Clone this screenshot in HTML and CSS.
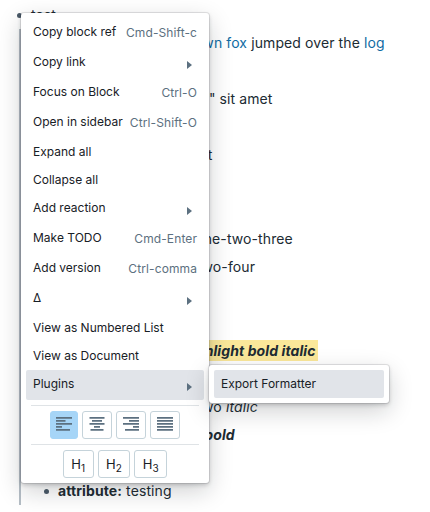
FILE: index.html
```html
<!DOCTYPE html>
<html lang="en">
<head>
    <meta charset="UTF-8">
    <title>Block menu</title>
    <link rel="stylesheet" href="styles.css">
</head>
<body>
    <div class="page">
        <div class="block top-block"><span class="bullet"></span>test</div>
        <div class="children">
            <div class="block shift-fox"><span class="bullet"></span>The <a href="#">quick brown fox</a> jumped over the <a href="#">log</a></div>
            <div class="block empty"></div>
            <div class="block shift-lorem"><span class="bullet"></span>Lorem "ipsum dolor" sit amet</div>
            <div class="block empty"></div>
            <div class="block shift-text"><span class="bullet"></span>Some text</div>
            <div class="block empty"></div>
            <div class="block empty"></div>
            <div class="block shift-three"><span class="bullet"></span>Numbers one-two-three</div>
            <div class="block shift-four"><span class="bullet"></span>one-two-four</div>
            <div class="block empty"></div>
            <div class="block empty"></div>
            <div class="block shift-mark"><span class="bullet"></span><mark><b><i>highlight bold italic</i></b></mark></div>
            <div class="block empty"></div>
            <div class="block shift-italic"><span class="bullet"></span>one two <i>italic</i></div>
            <div class="block shift-bold"><span class="bullet"></span><b><i>one bold</i></b></div>
            <div class="block empty"></div>
            <div class="block"><span class="bullet"></span><b>attribute:</b> testing</div>
        </div>
    </div>

    <div class="menu">
        <div class="item"><span class="text">Copy block ref</span><span class="label">Cmd-Shift-c</span></div>
        <div class="item"><span class="text">Copy link</span><span class="caret"></span></div>
        <div class="item"><span class="text">Focus on Block</span><span class="label">Ctrl-O</span></div>
        <div class="item"><span class="text">Open in sidebar</span><span class="label">Ctrl-Shift-O</span></div>
        <div class="item short"><span class="text">Expand all</span></div>
        <div class="item short"><span class="text">Collapse all</span></div>
        <div class="item"><span class="text">Add reaction</span><span class="caret"></span></div>
        <div class="item"><span class="text">Make TODO</span><span class="label">Cmd-Enter</span></div>
        <div class="item"><span class="text">Add version</span><span class="label">Ctrl-comma</span></div>
        <div class="item"><span class="text">Δ</span><span class="caret"></span></div>
        <div class="item short"><span class="text">View as Numbered List</span></div>
        <div class="item short"><span class="text">View as Document</span></div>
        <div class="item active"><span class="text">Plugins</span><span class="caret"></span></div>
        <div class="divider"></div>
        <div class="button-row">
            <button class="tool selected"><svg width="16" height="16" viewBox="0 0 16 16"><path d="M0 0h16v1.7H0zM0 3h9.5v1.7H0zM0 6h16v1.7H0zM0 9h6v1.7H0zM0 12h14v1.7H0z"/></svg></button>
            <button class="tool"><svg width="16" height="16" viewBox="0 0 16 16"><path d="M.5 0h15v1.7H.5zM3 3h10v1.7H3zM.5 6h15v1.7H.5zM5 9h6v1.7H5zM1.5 12h13v1.7H1.5z"/></svg></button>
            <button class="tool"><svg width="16" height="16" viewBox="0 0 16 16"><path d="M0 0h16v1.7H0zM6 3h10v1.7H6zM0 6h16v1.7H0zM10 9h6v1.7h-6zM2 12h14v1.7H2z"/></svg></button>
            <button class="tool"><svg width="16" height="16" viewBox="0 0 16 16"><path d="M0 0h16v1.7H0zM0 3h16v1.7H0zM0 6h16v1.7H0zM0 9h16v1.7H0zM0 12h16v1.7H0z"/></svg></button>
        </div>
        <div class="divider"></div>
        <div class="button-row">
            <button class="tool heading">H<sub>1</sub></button>
            <button class="tool heading">H<sub>2</sub></button>
            <button class="tool heading">H<sub>3</sub></button>
        </div>
    </div>

    <div class="menu submenu">
        <div class="item active"><span class="text">Export Formatter</span></div>
    </div>
</body>
</html>
```
FILE: styles.css
```css
html, body {
    margin: 0;
    height: 100%;
    overflow: hidden;
}

body {
    font-family: Inter, "Noto Sans", sans-serif;
    font-size: 14px;
    letter-spacing: 0.1px;
    color: #202b33;
    background-color: #fff;
}

a {
    color: #106ba3;
    text-decoration: none;
}

mark {
    background-color: #fbe89a;
    color: inherit;
    padding: 2px 2px;
}

.page {
    padding: 1px 0 0 31px;
}

.children {
    border-left: 2px solid #b5bec6;
    margin-left: -12px;
    padding-left: 37px;
}

.block {
    position: relative;
    height: 28px;
    line-height: 28px;
    white-space: nowrap;
}

.bullet {
    position: absolute;
    left: -14px;
    top: 12px;
    width: 5px;
    height: 5px;
    border-radius: 50%;
    background-color: #4a5a68;
}

/* Rows whose start is hidden by the menu */
.shift-fox { padding-left: 52px; }
.shift-lorem { padding-left: 19px; }
.shift-text { padding-left: 87px; }
.shift-three { padding-left: 72px; }
.shift-four { padding-left: 107px; }
.shift-mark { padding-left: 123px; }
.shift-italic { padding-left: 110px; }
.shift-bold { padding-left: 117px; }

/* Context menu */
.menu {
    position: absolute;
    left: 21px;
    top: 13px;
    width: 178px;
    padding: 5px;
    background-color: #fff;
    border-radius: 3px;
    box-shadow: 0 0 0 1px rgba(16,22,26,0.1), 0 2px 4px rgba(16,22,26,0.2), 0 8px 24px rgba(16,22,26,0.2);
    color: #182026;
    font-size: 12px;
    letter-spacing: 0;
}

.submenu {
    left: 209px;
    top: 365px;
    width: 170px;
}

.item {
    display: flex;
    align-items: flex-start;
    justify-content: space-between;
    height: 30px;
    padding: 6px 7px 0;
    box-sizing: border-box;
    line-height: 16px;
    border-radius: 2px;
    white-space: nowrap;
}

.item.short {
    height: 28px;
}

.item.active {
    background-color: #e1e4e9;
}

.submenu .item {
    height: 28px;
}

.label {
    position: relative;
    top: 1px;
    color: #5c7080;
    letter-spacing: 0.1px;
}

.caret {
    width: 0;
    height: 0;
    margin: 7px 5px 0 0;
    border-left: 5px solid #5c7080;
    border-top: 4px solid transparent;
    border-bottom: 4px solid transparent;
}

.divider {
    height: 1px;
    margin: 5px;
    background-color: #dfe3e6;
}

.button-row {
    display: flex;
    justify-content: center;
    gap: 4px;
}

.tool {
    display: flex;
    align-items: center;
    justify-content: center;
    width: 30px;
    height: 28px;
    padding: 0;
    background: #fff;
    border: 1px solid #c5d3da;
    border-radius: 3px;
    color: #182026;
    font-family: inherit;
    font-size: 13px;
}

.tool svg {
    fill: #5c7080;
}

.tool.selected {
    width: 28px;
    background-color: #a6d5f7;
    border-color: #a6d5f7;
}

.heading {
    display: block;
    width: auto;
    padding: 0 7.5px;
}

.heading sub {
    font-size: 10px;
    line-height: 1;
    vertical-align: -3px;
}
```
